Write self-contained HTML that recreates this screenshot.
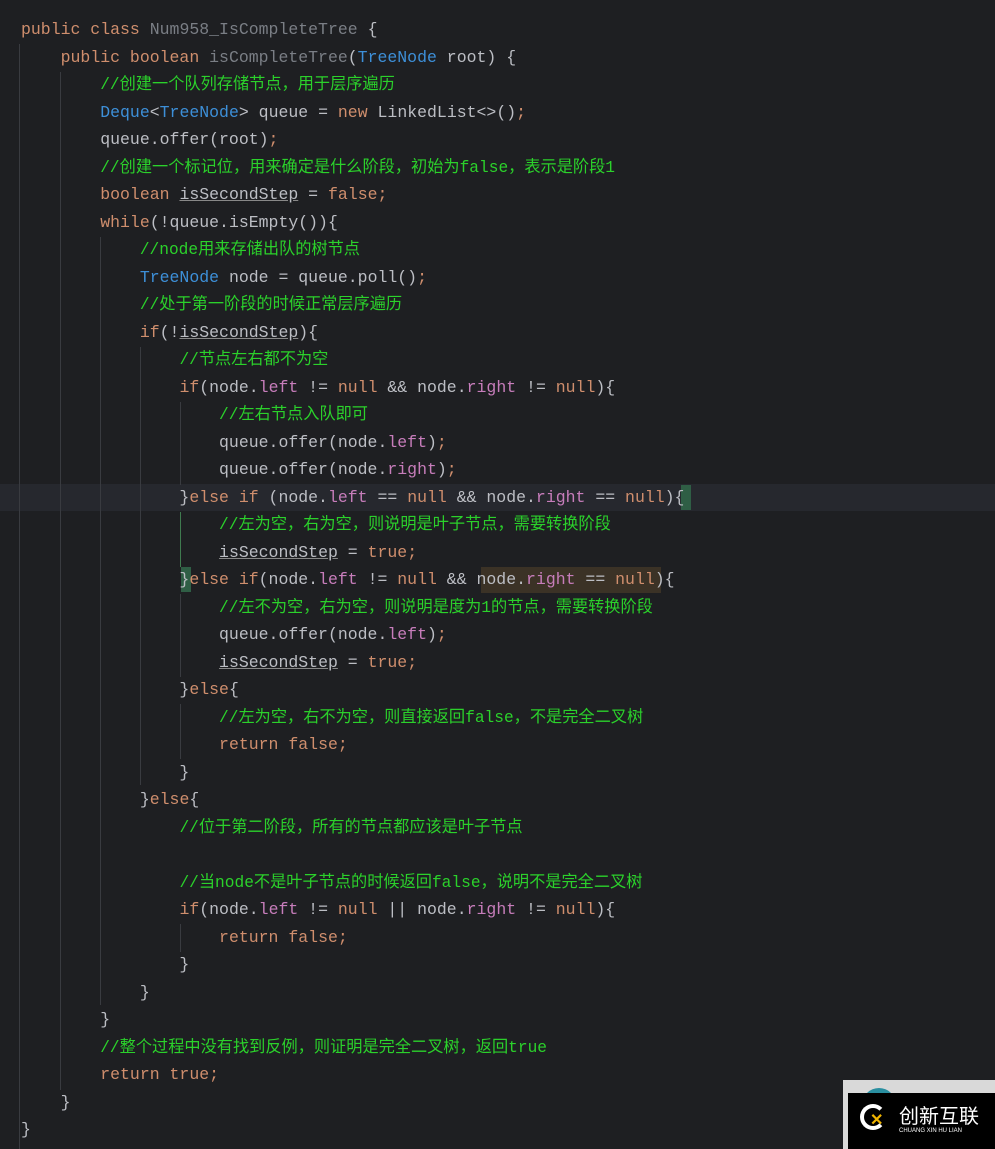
<!DOCTYPE html><html><head><meta charset="utf-8"><style>
body{margin:0;width:995px;height:1149px;background:#1e1f22;overflow:hidden;position:relative;font-family:"Liberation Mono","Noto Sans CJK SC",monospace;font-size:16.5px;color:#bcbec4}
.l{position:absolute;left:21px;height:27.5px;line-height:27.5px;white-space:pre}
.k{color:#cf8e6d}.c{color:#2bd12b;font-size:16.2px}.t{color:#3d8fd8}.f{color:#c77dbb}.g{color:#7a7e85}.u{text-decoration:underline;text-decoration-color:#888}
.v{position:absolute;width:1px;background:#393b40}
</style></head><body>
<div style="position:absolute;left:0;top:484px;width:995px;height:27px;background:#26282e"></div>
<div style="position:absolute;left:481px;top:567px;width:180px;height:26px;background:#3b3226"></div>
<div style="position:absolute;left:681px;top:485px;width:10px;height:25px;background:#2f5e45"></div>
<div style="position:absolute;left:181px;top:567px;width:10px;height:25px;background:#2f5e45"></div>
<div class="v" style="left:19px;top:44px;height:1105px"></div>
<div class="v" style="left:60px;top:72px;height:1018px"></div>
<div class="v" style="left:100px;top:237px;height:768px"></div>
<div class="v" style="left:140px;top:347px;height:438px"></div>
<div class="v" style="left:180px;top:402px;height:83px"></div>
<div class="v" style="left:180px;top:512px;height:55px;background:#3f7a4f"></div>
<div class="v" style="left:180px;top:594px;height:83px"></div>
<div class="v" style="left:180px;top:704px;height:55px"></div>
<div class="v" style="left:180px;top:924px;height:28px"></div>
<div class="l" style="top:16px"><span class="k">public class </span><span class="g">Num958_IsCompleteTree</span> {</div>
<div class="l" style="top:43.5px">    <span class="k">public boolean </span><span class="g">isCompleteTree</span>(<span class="t">TreeNode</span> root) {</div>
<div class="l" style="top:71px">        <span class="c">//创建一个队列存储节点，用于层序遍历</span></div>
<div class="l" style="top:98.5px">        <span class="t">Deque</span>&lt;<span class="t">TreeNode</span>&gt; queue = <span class="k">new</span> LinkedList&lt;&gt;()<span class="k">;</span></div>
<div class="l" style="top:126px">        queue.offer(root)<span class="k">;</span></div>
<div class="l" style="top:153.5px">        <span class="c">//创建一个标记位，用来确定是什么阶段，初始为false，表示是阶段1</span></div>
<div class="l" style="top:181px">        <span class="k">boolean </span><span class="u">isSecondStep</span> = <span class="k">false;</span></div>
<div class="l" style="top:208.5px">        <span class="k">while</span>(!queue.isEmpty()){</div>
<div class="l" style="top:236px">            <span class="c">//node用来存储出队的树节点</span></div>
<div class="l" style="top:263.5px">            <span class="t">TreeNode</span> node = queue.poll()<span class="k">;</span></div>
<div class="l" style="top:291px">            <span class="c">//处于第一阶段的时候正常层序遍历</span></div>
<div class="l" style="top:318.5px">            <span class="k">if</span>(!<span class="u">isSecondStep</span>){</div>
<div class="l" style="top:346px">                <span class="c">//节点左右都不为空</span></div>
<div class="l" style="top:373.5px">                <span class="k">if</span>(node.<span class="f">left</span> != <span class="k">null</span> &amp;&amp; node.<span class="f">right</span> != <span class="k">null</span>){</div>
<div class="l" style="top:401px">                    <span class="c">//左右节点入队即可</span></div>
<div class="l" style="top:428.5px">                    queue.offer(node.<span class="f">left</span>)<span class="k">;</span></div>
<div class="l" style="top:456px">                    queue.offer(node.<span class="f">right</span>)<span class="k">;</span></div>
<div class="l" style="top:483.5px">                }<span class="k">else if </span>(node.<span class="f">left</span> == <span class="k">null</span> &amp;&amp; node.<span class="f">right</span> == <span class="k">null</span>){</div>
<div class="l" style="top:511px">                    <span class="c">//左为空，右为空，则说明是叶子节点，需要转换阶段</span></div>
<div class="l" style="top:538.5px">                    <span class="u">isSecondStep</span> = <span class="k">true;</span></div>
<div class="l" style="top:566px">                }<span class="k">else if</span>(node.<span class="f">left</span> != <span class="k">null</span> &amp;&amp; node.<span class="f">right</span> == <span class="k">null</span>){</div>
<div class="l" style="top:593.5px">                    <span class="c">//左不为空，右为空，则说明是度为1的节点，需要转换阶段</span></div>
<div class="l" style="top:621px">                    queue.offer(node.<span class="f">left</span>)<span class="k">;</span></div>
<div class="l" style="top:648.5px">                    <span class="u">isSecondStep</span> = <span class="k">true;</span></div>
<div class="l" style="top:676px">                }<span class="k">else</span>{</div>
<div class="l" style="top:703.5px">                    <span class="c">//左为空，右不为空，则直接返回false，不是完全二叉树</span></div>
<div class="l" style="top:731px">                    <span class="k">return false;</span></div>
<div class="l" style="top:758.5px">                }</div>
<div class="l" style="top:786px">            }<span class="k">else</span>{</div>
<div class="l" style="top:813.5px">                <span class="c">//位于第二阶段，所有的节点都应该是叶子节点</span></div>
<div class="l" style="top:868.5px">                <span class="c">//当node不是叶子节点的时候返回false，说明不是完全二叉树</span></div>
<div class="l" style="top:896px">                <span class="k">if</span>(node.<span class="f">left</span> != <span class="k">null</span> || node.<span class="f">right</span> != <span class="k">null</span>){</div>
<div class="l" style="top:923.5px">                    <span class="k">return false;</span></div>
<div class="l" style="top:951px">                }</div>
<div class="l" style="top:978.5px">            }</div>
<div class="l" style="top:1006px">        }</div>
<div class="l" style="top:1033.5px">        <span class="c">//整个过程中没有找到反例，则证明是完全二叉树，返回true</span></div>
<div class="l" style="top:1061px">        <span class="k">return true;</span></div>
<div class="l" style="top:1088.5px">    }</div>
<div class="l" style="top:1116px">}</div>
<div style="position:absolute;left:843px;top:1080px;width:152px;height:69px;background:#d9d9d9"></div>
<div style="position:absolute;left:862px;top:1088px;width:34px;height:34px;border-radius:50%;background:#2a8fa0"></div>
<div style="position:absolute;left:848px;top:1093px;width:147px;height:56px;background:#000"></div>
<div style="position:absolute;left:860px;top:1104px;width:26px;height:26px;border-radius:50%;border:4px solid #fff;border-right-color:transparent;box-sizing:border-box"></div>
<div style="position:absolute;left:870px;top:1110px;color:#f0b400;font:bold 16px 'Liberation Sans',sans-serif">✕</div>
<div style="position:absolute;left:899px;top:1104px;color:#fff;font:20px 'Noto Sans CJK SC',sans-serif;line-height:22px">创新互联</div>
<div style="position:absolute;left:899px;top:1128px;color:#fff;font:6px 'Liberation Sans',sans-serif">CHUANG XIN HU LIAN</div>
</body></html>
